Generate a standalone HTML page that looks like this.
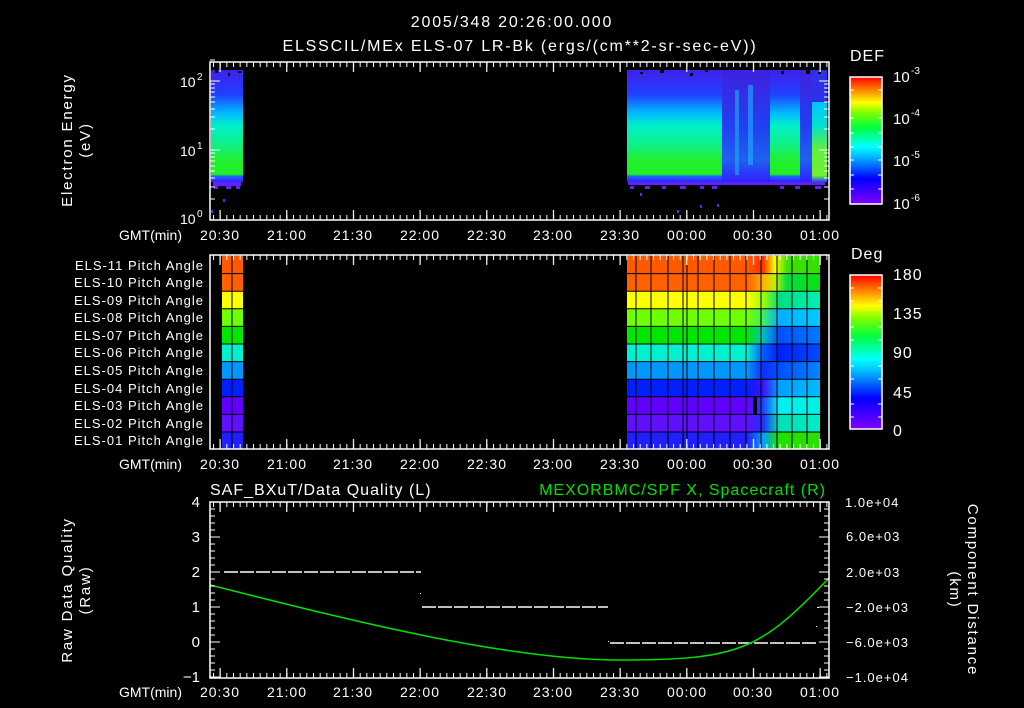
<!DOCTYPE html>
<html><head><meta charset="utf-8"><style>
html,body{margin:0;padding:0;background:#000;width:1024px;height:708px;overflow:hidden}
svg{display:block}
text{font-family:"Liberation Sans",sans-serif;fill:#fff}
.ls1{letter-spacing:1px}
.ls2{letter-spacing:1.8px}
</style></head><body>
<svg width="1024" height="708" viewBox="0 0 1024 708" xmlns="http://www.w3.org/2000/svg">
<defs>
<pattern id="mt" x="213" y="0" width="6.667" height="708" patternUnits="userSpaceOnUse"><rect x="0" y="0" width="1" height="708" fill="#fff"/></pattern>
<pattern id="Mt" x="219.5" y="0" width="66.67" height="708" patternUnits="userSpaceOnUse"><rect x="0" y="0" width="1.2" height="708" fill="#fff"/></pattern>
<linearGradient id="cb" x1="0" y1="1" x2="0" y2="0">
<stop offset="0" stop-color="#8000ff"/><stop offset="0.2" stop-color="#0000ff"/><stop offset="0.38" stop-color="#00c0ff"/><stop offset="0.45" stop-color="#00ffff"/><stop offset="0.6" stop-color="#00ff40"/><stop offset="0.72" stop-color="#80ff00"/><stop offset="0.8" stop-color="#ffff00"/><stop offset="0.9" stop-color="#ff8000"/><stop offset="1" stop-color="#ff0000"/></linearGradient>
<linearGradient id="sp" x1="0" y1="70" x2="0" y2="182" gradientUnits="userSpaceOnUse">
<stop offset="0" stop-color="#4020e8"/><stop offset="0.22" stop-color="#2040ff"/><stop offset="0.38" stop-color="#00b8ff"/><stop offset="0.5" stop-color="#00f0c8"/><stop offset="0.68" stop-color="#10f080"/><stop offset="0.8" stop-color="#20f030"/><stop offset="0.93" stop-color="#20f020"/><stop offset="0.95" stop-color="#2060ff"/><stop offset="1" stop-color="#3020ff"/></linearGradient>
<linearGradient id="dk" x1="0" y1="70" x2="0" y2="182" gradientUnits="userSpaceOnUse">
<stop offset="0" stop-color="#4020e0"/><stop offset="0.5" stop-color="#2040f0"/><stop offset="0.8" stop-color="#2060f0"/><stop offset="1" stop-color="#3020ff"/></linearGradient>
<linearGradient id="sp2" x1="0" y1="100" x2="0" y2="182" gradientUnits="userSpaceOnUse">
<stop offset="0" stop-color="#00c0ff"/><stop offset="0.3" stop-color="#00e0d0"/><stop offset="0.6" stop-color="#60f040"/><stop offset="0.92" stop-color="#70f030"/><stop offset="1" stop-color="#2040ff"/></linearGradient>
</defs>

<text x="512" y="27" font-size="16" text-anchor="middle" class="ls2">2005/348 20:26:00.000</text>
<text x="520" y="51" font-size="16" text-anchor="middle" class="ls2">ELSSCIL/MEx ELS-07 LR-Bk  (ergs/(cm**2-sr-sec-eV))</text>

<!-- TOP PANEL -->
<rect x="211" y="70" width="32" height="112" fill="url(#sp)"/>
<rect x="627" y="70" width="200" height="112" fill="url(#sp)"/>
<rect x="722" y="70" width="48" height="112" fill="url(#dk)"/>
<rect x="735" y="90" width="4" height="85" fill="#20a0f0" opacity="0.7"/>
<rect x="748" y="85" width="5" height="80" fill="#20b0ff" opacity="0.6"/>
<rect x="800" y="70" width="12" height="112" fill="url(#dk)"/>
<rect x="812" y="70" width="15" height="32" fill="#3030e8"/>
<rect x="812" y="102" width="15" height="80" fill="url(#sp2)"/>
<g fill="#000">
<rect x="215" y="70" width="3" height="3"/><rect x="228" y="73" width="2" height="3"/><rect x="238" y="71" width="3" height="2"/>
<rect x="640" y="72" width="3" height="2"/><rect x="660" y="70" width="4" height="3"/><rect x="690" y="73" width="3" height="3"/><rect x="705" y="70" width="3" height="2"/><rect x="781" y="71" width="3" height="3"/><rect x="806" y="70" width="4" height="4"/><rect x="818" y="72" width="3" height="2"/>
</g>
<g fill="#6020ff">
<rect x="213" y="182" width="28" height="4"/><rect x="214" y="186" width="4" height="3"/><rect x="226" y="186" width="5" height="3"/><rect x="236" y="186" width="4" height="3"/><rect x="223" y="199" width="2" height="3"/><rect x="211" y="210" width="2" height="3"/>
<rect x="628" y="182" width="197" height="3"/><rect x="630" y="186" width="4" height="3"/><rect x="645" y="186" width="5" height="3"/><rect x="662" y="186" width="4" height="3"/><rect x="680" y="186" width="6" height="3"/><rect x="700" y="186" width="4" height="3"/><rect x="712" y="186" width="5" height="3"/><rect x="780" y="186" width="4" height="3"/><rect x="795" y="186" width="5" height="3"/><rect x="815" y="186" width="6" height="3"/><rect x="640" y="193" width="2" height="3"/><rect x="700" y="205" width="2" height="3"/><rect x="677" y="210" width="2" height="3"/><rect x="717" y="204" width="2" height="3"/>
</g>
<rect x="210" y="62" width="619" height="158" fill="none" stroke="#fff" stroke-width="1.5"/>
<rect x="210" y="62" width="619" height="5" fill="url(#mt)"/>
<rect x="210" y="62" width="619" height="10" fill="url(#Mt)"/>
<rect x="210" y="215" width="619" height="5" fill="url(#mt)"/>
<rect x="210" y="210" width="619" height="10" fill="url(#Mt)"/>
<g stroke="#fff" stroke-width="1">
<path d="M210 81h10M210 150h10M210 199h5M210 187h5M210 178h5M210 171h5M210 166h5M210 161h5M210 157h5M210 153h5M210 129h5M210 117h5M210 109h5M210 102h5M210 97h5M210 92h5M210 88h5M210 84h5M210 60h5"/>
<path d="M829 81h-10M829 150h-10M829 199h-5M829 187h-5M829 178h-5M829 171h-5M829 166h-5M829 161h-5M829 157h-5M829 153h-5M829 129h-5M829 117h-5M829 109h-5M829 102h-5M829 97h-5M829 92h-5M829 88h-5M829 84h-5"/>
</g>
<text x="180" y="87" font-size="14">10</text><text x="197" y="80" font-size="10">2</text>
<text x="180" y="156" font-size="14">10</text><text x="197" y="149" font-size="10">1</text>
<text x="180" y="224" font-size="14">10</text><text x="197" y="217" font-size="10">0</text>
<text transform="translate(72,140) rotate(-90)" font-size="15" text-anchor="middle" class="ls2">Electron Energy</text>
<text transform="translate(90,140) rotate(-90)" font-size="15" text-anchor="middle" class="ls2">(eV)</text>

<g font-size="14" text-anchor="middle" class="ls1">
<text x="220" y="240">20:30</text><text x="287" y="240">21:00</text><text x="353" y="240">21:30</text><text x="420" y="240">22:00</text><text x="487" y="240">22:30</text><text x="553" y="240">23:00</text><text x="620" y="240">23:30</text><text x="687" y="240">00:00</text><text x="753" y="240">00:30</text><text x="820" y="240">01:00</text>
<text x="220" y="469">20:30</text><text x="287" y="469">21:00</text><text x="353" y="469">21:30</text><text x="420" y="469">22:00</text><text x="487" y="469">22:30</text><text x="553" y="469">23:00</text><text x="620" y="469">23:30</text><text x="687" y="469">00:00</text><text x="753" y="469">00:30</text><text x="820" y="469">01:00</text>
<text x="220" y="697">20:30</text><text x="287" y="697">21:00</text><text x="353" y="697">21:30</text><text x="420" y="697">22:00</text><text x="487" y="697">22:30</text><text x="553" y="697">23:00</text><text x="620" y="697">23:30</text><text x="687" y="697">00:00</text><text x="753" y="697">00:30</text><text x="820" y="697">01:00</text>
</g>
<g font-size="14" text-anchor="end"><text x="182" y="240">GMT(min)</text><text x="182" y="469">GMT(min)</text><text x="182" y="697">GMT(min)</text></g>

<!-- DEF colorbar -->
<text x="850" y="61" font-size="16" class="ls1">DEF</text>
<rect x="850" y="77" width="32" height="127" fill="url(#cb)" stroke="#fff" stroke-width="1.5"/>
<g stroke="#fff"><path d="M882 90h-4M882 118h-4M882 133h-4M882 147h-4M882 160h-4M882 175h-4M882 189h-4M850 90h4M850 118h4M850 133h4M850 147h4M850 160h4M850 175h4M850 189h4"/></g>
<g font-size="15"><text x="893" y="82">10</text><text x="911" y="74" font-size="10">-3</text>
<text x="893" y="124">10</text><text x="911" y="116" font-size="10">-4</text>
<text x="893" y="166">10</text><text x="911" y="158" font-size="10">-5</text>
<text x="893" y="209">10</text><text x="911" y="201" font-size="10">-6</text></g>

<!-- MIDDLE PANEL -->
<defs>
<linearGradient id="r11" x1="627" x2="827" y1="0" y2="0" gradientUnits="userSpaceOnUse"><stop offset="0.6" stop-color="#ff5a00"/><stop offset="0.68" stop-color="#ff3000"/><stop offset="0.74" stop-color="#ffff00"/><stop offset="0.8" stop-color="#40e000"/><stop offset="1" stop-color="#30e000"/></linearGradient>
<linearGradient id="r10" x1="627" x2="827" y1="0" y2="0" gradientUnits="userSpaceOnUse"><stop offset="0.6" stop-color="#ff6000"/><stop offset="0.68" stop-color="#ffb000"/><stop offset="0.74" stop-color="#c0f000"/><stop offset="0.8" stop-color="#00e040"/><stop offset="1" stop-color="#10e000"/></linearGradient>
<linearGradient id="r9" x1="627" x2="827" y1="0" y2="0" gradientUnits="userSpaceOnUse"><stop offset="0.6" stop-color="#ffff00"/><stop offset="0.68" stop-color="#a0ff00"/><stop offset="0.76" stop-color="#00e080"/><stop offset="1" stop-color="#00f0c0"/></linearGradient>
<linearGradient id="r8" x1="627" x2="827" y1="0" y2="0" gradientUnits="userSpaceOnUse"><stop offset="0.6" stop-color="#70ff00"/><stop offset="0.68" stop-color="#40f060"/><stop offset="0.76" stop-color="#00b0ff"/><stop offset="1" stop-color="#00d0ff"/></linearGradient>
<linearGradient id="r7" x1="627" x2="827" y1="0" y2="0" gradientUnits="userSpaceOnUse"><stop offset="0.6" stop-color="#00e800"/><stop offset="0.68" stop-color="#00c0c0"/><stop offset="0.76" stop-color="#0050ff"/><stop offset="1" stop-color="#0080ff"/></linearGradient>
<linearGradient id="r6" x1="627" x2="827" y1="0" y2="0" gradientUnits="userSpaceOnUse"><stop offset="0.6" stop-color="#00f0d0"/><stop offset="0.68" stop-color="#0060ff"/><stop offset="0.76" stop-color="#0020ff"/><stop offset="1" stop-color="#0050ff"/></linearGradient>
<linearGradient id="r5" x1="627" x2="827" y1="0" y2="0" gradientUnits="userSpaceOnUse"><stop offset="0.6" stop-color="#0098ff"/><stop offset="0.68" stop-color="#1030ff"/><stop offset="0.76" stop-color="#0050ff"/><stop offset="1" stop-color="#0090ff"/></linearGradient>
<linearGradient id="r4" x1="627" x2="827" y1="0" y2="0" gradientUnits="userSpaceOnUse"><stop offset="0.6" stop-color="#0020ff"/><stop offset="0.68" stop-color="#4010ff"/><stop offset="0.76" stop-color="#00a0ff"/><stop offset="1" stop-color="#00c0ff"/></linearGradient>
<linearGradient id="r3" x1="627" x2="827" y1="0" y2="0" gradientUnits="userSpaceOnUse"><stop offset="0.6" stop-color="#6000ff"/><stop offset="0.68" stop-color="#2040ff"/><stop offset="0.76" stop-color="#00f0f0"/><stop offset="1" stop-color="#00f0e0"/></linearGradient>
<linearGradient id="r2" x1="627" x2="827" y1="0" y2="0" gradientUnits="userSpaceOnUse"><stop offset="0.6" stop-color="#6010ff"/><stop offset="0.68" stop-color="#2030ff"/><stop offset="0.76" stop-color="#00e0b0"/><stop offset="1" stop-color="#00f0d0"/></linearGradient>
<linearGradient id="r1" x1="627" x2="827" y1="0" y2="0" gradientUnits="userSpaceOnUse"><stop offset="0.6" stop-color="#2020ff"/><stop offset="0.68" stop-color="#00a0ff"/><stop offset="0.76" stop-color="#20e000"/><stop offset="1" stop-color="#30e000"/></linearGradient>
</defs>
<g>
<rect x="627" y="256" width="193" height="17.6" fill="url(#r11)"/>
<rect x="627" y="273.6" width="193" height="17.6" fill="url(#r10)"/>
<rect x="627" y="291.2" width="193" height="17.6" fill="url(#r9)"/>
<rect x="627" y="308.8" width="193" height="17.6" fill="url(#r8)"/>
<rect x="627" y="326.4" width="193" height="17.6" fill="url(#r7)"/>
<rect x="627" y="344" width="193" height="17.6" fill="url(#r6)"/>
<rect x="627" y="361.6" width="193" height="17.6" fill="url(#r5)"/>
<rect x="627" y="379.2" width="193" height="17.6" fill="url(#r4)"/>
<rect x="627" y="396.8" width="193" height="17.6" fill="url(#r3)"/>
<rect x="627" y="414.4" width="193" height="17.6" fill="url(#r2)"/>
<rect x="627" y="432" width="193" height="17" fill="url(#r1)"/>
<rect x="222" y="256" width="21" height="17.6" fill="#ff5a00"/>
<rect x="222" y="273.6" width="21" height="17.6" fill="#ff6000"/>
<rect x="222" y="291.2" width="21" height="17.6" fill="#ffff00"/>
<rect x="222" y="308.8" width="21" height="17.6" fill="#70ff00"/>
<rect x="222" y="326.4" width="21" height="17.6" fill="#00e800"/>
<rect x="222" y="344" width="21" height="17.6" fill="#00f0d0"/>
<rect x="222" y="361.6" width="21" height="17.6" fill="#0098ff"/>
<rect x="222" y="379.2" width="21" height="17.6" fill="#0020ff"/>
<rect x="222" y="396.8" width="21" height="17.6" fill="#6000ff"/>
<rect x="222" y="414.4" width="21" height="17.6" fill="#6010ff"/>
<rect x="222" y="432" width="21" height="17" fill="#2020ff"/>
</g>
<g stroke="#000" stroke-width="1">
<path d="M222 273.6h21M222 291.2h21M222 308.8h21M222 326.4h21M222 344h21M222 361.6h21M222 379.2h21M222 396.8h21M222 414.4h21M222 432h21M232 256v193"/>
<path d="M627 273.6h193M627 291.2h193M627 308.8h193M627 326.4h193M627 344h193M627 361.6h193M627 379.2h193M627 396.8h193M627 414.4h193M627 432h193"/>
<path d="M636 256v193M651 256v193M668 256v193M683 256v193M687 256v193M698 256v193M714 256v193M730 256v193M746 256v193M761 256v193M777 256v193M792 256v193M807 256v193"/>
</g>
<rect x="753" y="396" width="4" height="18" fill="#000"/>
<rect x="210" y="255" width="619" height="194" fill="none" stroke="#fff" stroke-width="1.5"/>
<rect x="210" y="255" width="619" height="5" fill="url(#mt)"/>
<rect x="210" y="255" width="619" height="10" fill="url(#Mt)"/>
<rect x="210" y="444" width="619" height="5" fill="url(#mt)"/>
<rect x="210" y="439" width="619" height="10" fill="url(#Mt)"/>
<g font-size="13" text-anchor="end" class="ls1">
<text x="204" y="270">ELS-11 Pitch Angle</text>
<text x="204" y="287">ELS-10 Pitch Angle</text>
<text x="204" y="305">ELS-09 Pitch Angle</text>
<text x="204" y="322">ELS-08 Pitch Angle</text>
<text x="204" y="340">ELS-07 Pitch Angle</text>
<text x="204" y="357">ELS-06 Pitch Angle</text>
<text x="204" y="375">ELS-05 Pitch Angle</text>
<text x="204" y="393">ELS-04 Pitch Angle</text>
<text x="204" y="410">ELS-03 Pitch Angle</text>
<text x="204" y="428">ELS-02 Pitch Angle</text>
<text x="204" y="445">ELS-01 Pitch Angle</text>
</g>
<!-- Deg colorbar -->
<text x="851" y="259" font-size="16" class="ls1">Deg</text>
<rect x="850" y="275" width="32" height="154" fill="url(#cb)" stroke="#fff" stroke-width="1.5"/>
<g stroke="#fff"><path d="M882 288h-4M882 301h-4M882 327h-4M882 340h-4M882 366h-4M882 379h-4M882 404h-4M882 417h-4M850 288h4M850 301h4M850 327h4M850 340h4M850 366h4M850 379h4M850 404h4M850 417h4"/></g>
<g font-size="16" class="ls1"><text x="893" y="280">180</text><text x="893" y="319">135</text><text x="893" y="358">90</text><text x="893" y="398">45</text><text x="893" y="436">0</text></g>

<!-- BOTTOM PANEL -->
<text x="210" y="495" font-size="16" class="ls1">SAF_BXuT/Data Quality (L)</text>
<text x="826" y="495" font-size="16" text-anchor="end" class="ls1" style="fill:#00e000">MEXORBMC/SPF X, Spacecraft (R)</text>
<path d="M224 572H421M422 607H608M610 643H816" stroke="#fff" stroke-width="1.5" stroke-dasharray="14 2"/>
<rect x="420" y="593" width="1" height="1" fill="#fff"/><rect x="608" y="641" width="1" height="1" fill="#fff"/>
<rect x="817" y="607" width="2" height="1" fill="#fff"/><rect x="816" y="626" width="1" height="1" fill="#fff"/>
<path d="M210 585 C 330 615, 500 660, 620 660 S 760 650, 829 578" fill="none" stroke="#00e000" stroke-width="1.5"/>
<rect x="210" y="502" width="619" height="176" fill="none" stroke="#fff" stroke-width="1.5"/>
<rect x="210" y="502" width="619" height="5" fill="url(#mt)"/>
<rect x="210" y="502" width="619" height="10" fill="url(#Mt)"/>
<rect x="210" y="673" width="619" height="5" fill="url(#mt)"/>
<rect x="210" y="668" width="619" height="10" fill="url(#Mt)"/>
<g stroke="#fff" stroke-width="1">
<path d="M210 502h10M210 537h10M210 572h10M210 607h10M210 642h10M210 677h10"/>
<path d="M210 509h5M210 516h5M210 523h5M210 530h5M210 544h5M210 551h5M210 558h5M210 565h5M210 579h5M210 586h5M210 593h5M210 600h5M210 614h5M210 621h5M210 628h5M210 635h5M210 649h5M210 656h5M210 663h5M210 670h5"/>
<path d="M829 502h-10M829 537h-10M829 572h-10M829 607h-10M829 642h-10M829 677h-10"/>
<path d="M829 509h-5M829 516h-5M829 523h-5M829 530h-5M829 544h-5M829 551h-5M829 558h-5M829 565h-5M829 579h-5M829 586h-5M829 593h-5M829 600h-5M829 614h-5M829 621h-5M829 628h-5M829 635h-5M829 649h-5M829 656h-5M829 663h-5M829 670h-5"/>
</g>
<g font-size="15" text-anchor="end"><text x="200" y="507">4</text><text x="200" y="542">3</text><text x="200" y="577">2</text><text x="200" y="612">1</text><text x="200" y="647">0</text><text x="200" y="682">−1</text></g>
<g font-size="13" class="ls1"><text x="845" y="507">1.0e+04</text><text x="846" y="541">6.0e+03</text><text x="846" y="577">2.0e+03</text><text x="846" y="612">−2.0e+03</text><text x="846" y="647">−6.0e+03</text><text x="846" y="682">−1.0e+04</text></g>
<text transform="translate(72,590) rotate(-90)" font-size="15" text-anchor="middle" class="ls2">Raw Data Quality</text>
<text transform="translate(90,590) rotate(-90)" font-size="15" text-anchor="middle" class="ls2">(Raw)</text>
<text transform="translate(968,590) rotate(90)" font-size="15" text-anchor="middle" class="ls2">Component Distance</text>
<text transform="translate(950,590) rotate(90)" font-size="15" text-anchor="middle" class="ls2">(km)</text>
</svg>
</body></html>
